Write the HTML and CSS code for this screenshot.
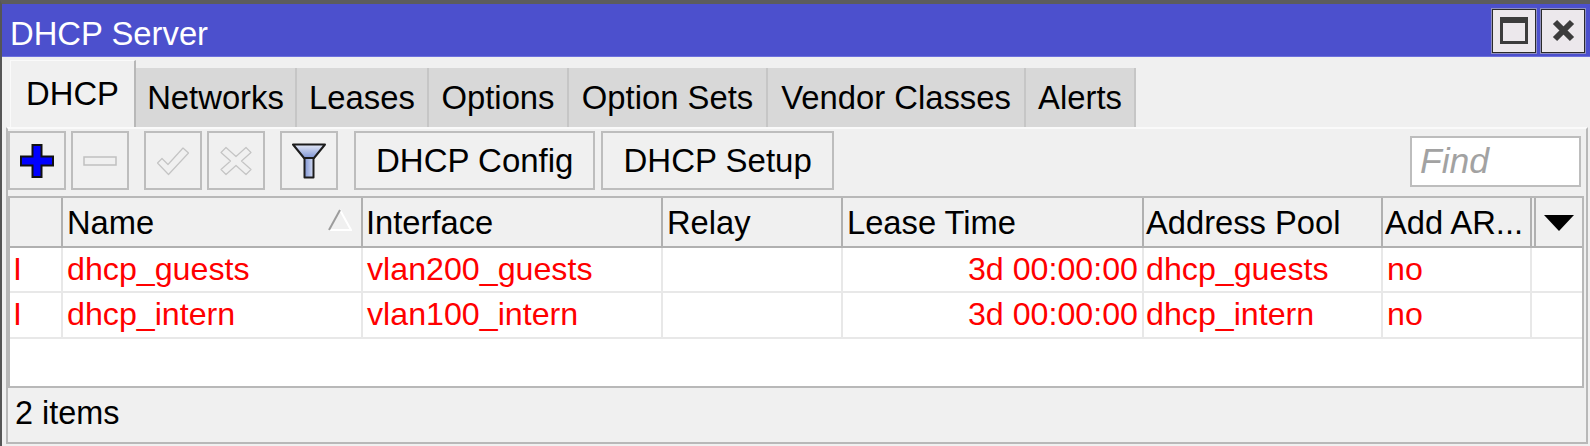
FILE: index.html
```html
<!DOCTYPE html>
<html lang="en">
<head>
    <meta charset="UTF-8">
    <title>DHCP Server</title>
    <link rel="stylesheet" href="styles.css">
</head>
<body>
    <div class="window">
        <div class="titlebar">
            <div class="title">DHCP Server</div>
            <div class="title-buttons">
                <button class="title-button">
                    <svg width="28" height="27" viewBox="0 0 28 27"><rect x="1.5" y="2.5" width="25" height="23" fill="none" stroke="#3c3c3c" stroke-width="3"/><rect x="0" y="0" width="28" height="6" fill="#3c3c3c"/></svg>
                </button>
                <button class="title-button">
                    <svg width="23" height="23" viewBox="0 0 23 23"><path d="M3 3 L20 20 M20 3 L3 20" stroke="#3c3c3c" stroke-width="6"/></svg>
                </button>
            </div>
        </div>

        <div class="tabs">
            <div class="tab tab-active">DHCP</div>
            <div class="tab">Networks</div>
            <div class="tab">Leases</div>
            <div class="tab">Options</div>
            <div class="tab">Option Sets</div>
            <div class="tab">Vendor Classes</div>
            <div class="tab">Alerts</div>
        </div>

        <div class="panel">
            <div class="toolbar">
                <button class="tool">
                    <svg width="34" height="34" viewBox="0 0 34 34"><path d="M12.5 1 H21.5 V12.5 H33 V21.5 H21.5 V33 H12.5 V21.5 H1 V12.5 H12.5 Z" fill="#0000ff" stroke="#111" stroke-width="2"/></svg>
                </button>
                <button class="tool">
                    <svg width="34" height="10" viewBox="0 0 34 10"><rect x="1" y="1" width="32" height="8" fill="#f0f0f0" stroke="#c0c0c0" stroke-width="1.500"/></svg>
                </button>
                <button class="tool tool-group">
                    <svg width="34" height="30" viewBox="0 0 34 30"><path d="M1.5 17 L6 12.500 L12 18.500 L27 2 L32.500 7 L12.500 28.500 Z" fill="none" stroke="#c4c4c4" stroke-width="1.200" stroke-linejoin="round"/></svg>
                </button>
                <button class="tool">
                    <svg width="32" height="30" viewBox="0 0 32 30"><path d="M6 1.500 L16 10.500 L26 1.500 L31 6.500 L21.500 15 L31 23.500 L26 28.500 L16 19.500 L6 28.500 L1 23.500 L10.500 15 L1 6.500 Z" fill="none" stroke="#c4c4c4" stroke-width="1.200" stroke-linejoin="round"/></svg>
                </button>
                <button class="tool tool-group">
                    <svg width="34" height="36" viewBox="0 0 34 36">
                        <defs>
                            <linearGradient id="funnelTop" x1="0" y1="0" x2="0" y2="1"><stop offset="0" stop-color="#e4e9f7"/><stop offset="1" stop-color="#7f95d4"/></linearGradient>
                            <linearGradient id="funnelStem" x1="0" y1="0" x2="1" y2="0"><stop offset="0" stop-color="#7f95d4"/><stop offset="1" stop-color="#d5dcf2"/></linearGradient>
                        </defs>
                        <path d="M1 1.500 H33 L22 15 H12 Z" fill="url(#funnelTop)" stroke="#1c1c1c" stroke-width="2" stroke-linejoin="round"/>
                        <path d="M12.500 15 H21.500 V34.500 H12.500 Z" fill="url(#funnelStem)" stroke="#1c1c1c" stroke-width="2" stroke-linejoin="round"/>
                    </svg>
                </button>
                <button class="tool tool-text tool-group">DHCP Config</button>
                <button class="tool tool-text">DHCP Setup</button>
                <div class="find">Find</div>
            </div>

            <div class="table">
                <div class="row row-head">
                    <div class="cell"></div>
                    <div class="cell cell-sort">Name
                        <svg class="sort-icon" width="24" height="22" viewBox="0 0 24 22"><path d="M12 1 L23 21 H1" stroke="#fff" stroke-width="2" fill="none"/><path d="M12 1 L1 21" stroke="#9c9c9c" stroke-width="2" fill="none"/></svg>
                    </div>
                    <div class="cell">Interface</div>
                    <div class="cell">Relay</div>
                    <div class="cell">Lease Time</div>
                    <div class="cell">Address Pool</div>
                    <div class="cell">Add AR...</div>
                    <div class="cell cell-menu">
                        <svg width="30" height="16" viewBox="0 0 30 16"><path d="M0 0 H30 L15 16 Z" fill="#000"/></svg>
                    </div>
                </div>
                <div class="row row-data">
                    <div class="cell">I</div>
                    <div class="cell">dhcp_guests</div>
                    <div class="cell">vlan200_guests</div>
                    <div class="cell"></div>
                    <div class="cell cell-right">3d 00:00:00</div>
                    <div class="cell">dhcp_guests</div>
                    <div class="cell">no</div>
                    <div class="cell"></div>
                </div>
                <div class="row row-data row-tall">
                    <div class="cell">I</div>
                    <div class="cell">dhcp_intern</div>
                    <div class="cell">vlan100_intern</div>
                    <div class="cell"></div>
                    <div class="cell cell-right">3d 00:00:00</div>
                    <div class="cell">dhcp_intern</div>
                    <div class="cell">no</div>
                    <div class="cell"></div>
                </div>
                <div class="table-empty"></div>
            </div>

            <div class="status">2 items</div>
        </div>
    </div>
</body>
</html>
```

FILE: styles.css
```css
/* RouterOS style window */
html, body {
    margin: 0;
    padding: 0;
}

body {
    width: 1590px;
    height: 446px;
    overflow: hidden;
    background-color: #f0f0f0;
    font-family: "Liberation Sans", Arial, sans-serif;
    font-size: 32.7px;
    color: #000000;
}

.window {
    display: flex;
    flex-direction: column;
    height: 446px;
    box-sizing: border-box;
    border-top: 4px solid #5c5c5c;
    border-left: 2px solid #555555;
}

.titlebar {
    display: flex;
    justify-content: space-between;
    align-items: center;
    height: 53px;
    flex-shrink: 0;
    padding: 1px 5px 0 8px;
    background-color: #4c50cd;
    border-bottom: 1px solid #6c70dc;
    box-sizing: border-box;
}

.title {
    margin-top: 6px;
    color: #ffffff;
    font-size: 32.8px;
}

.title-buttons {
    display: flex;
    gap: 5px;
}

.title-button {
    display: flex;
    justify-content: center;
    align-items: center;
    width: 44px;
    height: 44px;
    padding: 0;
    background-color: #ece8ec;
    border: 1px solid #2a2a2a;
    outline: 1px solid #8f8fc0;
}

/* Tabs */
.tabs {
    display: grid;
    grid-template-columns: 126px 161px 132px 140px 199px 258px 110px;
    justify-content: start;
    align-items: end;
    height: 70px;
    flex-shrink: 0;
    padding-left: 8px;
    box-sizing: border-box;
}

.tab {
    display: flex;
    justify-content: center;
    align-items: center;
    height: 59px;
    background-color: #d8d8d8;
    border-right: 2px solid #c6c6c6;
    box-sizing: border-box;
    font-size: 32.8px;
}

.tab-active {
    height: 67px;
    background-color: #f0f0f0;
    border-top: 1px solid #fafafa;
    border-left: 1px solid #fafafa;
    border-right: 2px solid #b8b8b8;
}

/* Panel below the tabs */
.panel {
    display: flex;
    flex-direction: column;
    flex-grow: 1;
    margin: 0 2px 2px 4px;
    border-top: 2px solid #fafafa;
    border-left: 2px solid #b8b8b8;
    border-right: 2px solid #b8b8b8;
    border-bottom: 2px solid #b8b8b8;
}

.toolbar {
    display: flex;
    align-items: center;
    gap: 5px;
    height: 59px;
    margin-top: 2px;
    flex-shrink: 0;
}

.tool {
    display: flex;
    justify-content: center;
    align-items: center;
    width: 58px;
    height: 59px;
    padding: 0;
    background-color: #f0f0f0;
    border: 2px solid #bdbdbd;
    box-sizing: border-box;
    font-family: inherit;
    font-size: 33px;
    color: #000000;
}

.tool-group {
    margin-left: 10px;
}

.tool-text {
    width: auto;
    padding: 0 20px;
}

.tool-text.tool-group {
    margin-left: 11px;
}

.tool-text + .tool-text {
    margin-left: 1px;
}

.find {
    display: flex;
    align-items: center;
    width: 171px;
    height: 51px;
    margin-top: 2px;
    margin-left: auto;
    margin-right: 5px;
    padding-left: 8px;
    background-color: #ffffff;
    border: 2px solid #bdbdbd;
    box-sizing: border-box;
    font-size: 35.500px;
    font-style: italic;
    color: #a2a2a2;
}

/* Table */
.table {
    display: flex;
    flex-direction: column;
    height: 192px;
    margin: 6px 2px 0 0;
    flex-shrink: 0;
    background-color: #ffffff;
    border: 2px solid #b8b8b8;
    box-sizing: border-box;
}

.row {
    display: grid;
    grid-template-columns: 53px 300px 300px 180px 301px 239px 149px 1fr;
    flex-shrink: 0;
    box-sizing: border-box;
}

.row-head {
    height: 50px;
    background-color: #f0f0f0;
    border-bottom: 2px solid #b0b0b0;
}

.row-data {
    height: 45px;
    color: #ff0000;
    font-size: 32.2px;
    border-bottom: 2px solid #e8e8e8;
}

.row-tall {
    height: 46px;
}

.cell {
    display: flex;
    align-items: center;
    padding: 0 4px;
    white-space: nowrap;
    overflow: hidden;
    box-sizing: border-box;
    border-right: 2px solid #e8e8e8;
}

.row-data .cell {
    padding-bottom: 1px;
}

.row-data .cell:first-child {
    padding-left: 3px;
}

.row-head .cell {
    padding-top: 1px;
    border-right: 2px solid #b0b0b0;
}

.row-head .cell:nth-child(3) {
    padding-left: 3px;
}

.row-head .cell:nth-child(7) {
    padding-left: 2px;
}

.row .cell:nth-child(6) {
    padding-left: 2px;
}

.row-data .cell:last-child,
.row-head .cell:last-child {
    border-right: none;
}

.cell-right {
    justify-content: flex-end;
}

.cell-sort {
    justify-content: space-between;
    padding-right: 9px;
}

.sort-icon {
    margin-bottom: 6px;
}

.row-head .cell-menu {
    justify-content: center;
    padding: 2px 0 0 0;
    border-left: 2px solid #b0b0b0;
    margin-left: 2px;
}

.table-empty {
    flex-grow: 1;
}

.status {
    display: flex;
    align-items: center;
    flex-grow: 1;
    padding-left: 7px;
    padding-bottom: 4px;
    font-size: 32.4px;
}
```
